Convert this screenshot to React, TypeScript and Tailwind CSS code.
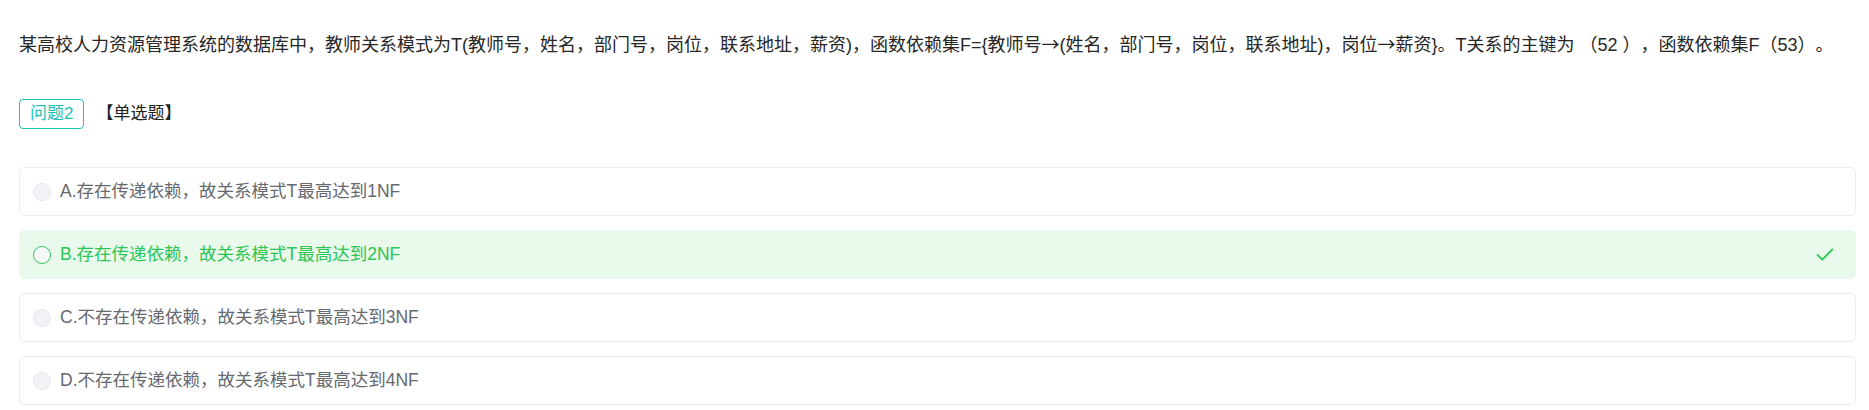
import { Check } from "lucide-react";

type Option = {
  label: string;
  text: string;
  correct?: boolean;
};

const options: Option[] = [
  { label: "A", text: "存在传递依赖，故关系模式T最高达到1NF" },
  { label: "B", text: "存在传递依赖，故关系模式T最高达到2NF", correct: true },
  { label: "C", text: "不存在传递依赖，故关系模式T最高达到3NF" },
  { label: "D", text: "不存在传递依赖，故关系模式T最高达到4NF" },
];

const font = "font-['Liberation_Sans','Noto_Sans_CJK_SC',sans-serif]";

function Arrow() {
  return <span className="font-['Noto_Sans_CJK_SC',sans-serif]">→</span>;
}

export default function App() {
  return (
    <div className={`${font} [text-spacing-trim:space-all] bg-white w-[1869px] h-[410px] pl-[19px] pr-[13px] pt-[31px]`}>
      <p className="text-[18px] leading-[24px] text-[#262626] whitespace-nowrap">
        某高校人力资源管理系统的数据库中，教师关系模式为T(教师号，姓名，部门号，岗位，联系地址，薪资)，函数依赖集F={"{"}教师号<Arrow />(姓名，部门号，岗位，联系地址)，岗位<Arrow />薪资{"}"}。T关系的主键为 （52 ），函数依赖集F（53）。
      </p>

      <div className="mt-[42px] flex items-center">
        <span className="h-[30px] px-[10px] flex items-center rounded-[4px] border border-[#1ec2b5] text-[#1ec2b5] text-[17px]">
          问题2
        </span>
        <span className="ml-[12px] text-[17px] text-[#222]">【单选题】</span>
      </div>

      <div className="mt-[38px] flex flex-col gap-[14px]">
        {options.map((o) => (
          <div
            key={o.label}
            className={
              o.correct
                ? "h-[49px] flex items-center rounded-[5px] border border-[#e9f9ec] bg-[#e9f9ec] pl-[13px] pr-[19px]"
                : "h-[49px] flex items-center rounded-[5px] border border-[#ebedf2] bg-white pl-[13px] pr-[19px]"
            }
          >
            <span
              className={
                o.correct
                  ? "w-[18px] h-[18px] rounded-full border border-[#2fc85a] bg-[#f7f8fa]"
                  : "w-[18px] h-[18px] rounded-full border border-[#e4e6ec] bg-[#f2f3f7]"
              }
            />
            <span
              className={
                o.correct
                  ? "ml-[9px] text-[17.5px] text-[#2cc556]"
                  : "ml-[9px] text-[17.5px] text-[#666a70]"
              }
            >
              {o.label}.{o.text}
            </span>
            {o.correct && (
              <Check className="ml-auto w-[22px] h-[22px] text-[#2fc85a]" strokeWidth={2} />
            )}
          </div>
        ))}
      </div>
    </div>
  );
}
